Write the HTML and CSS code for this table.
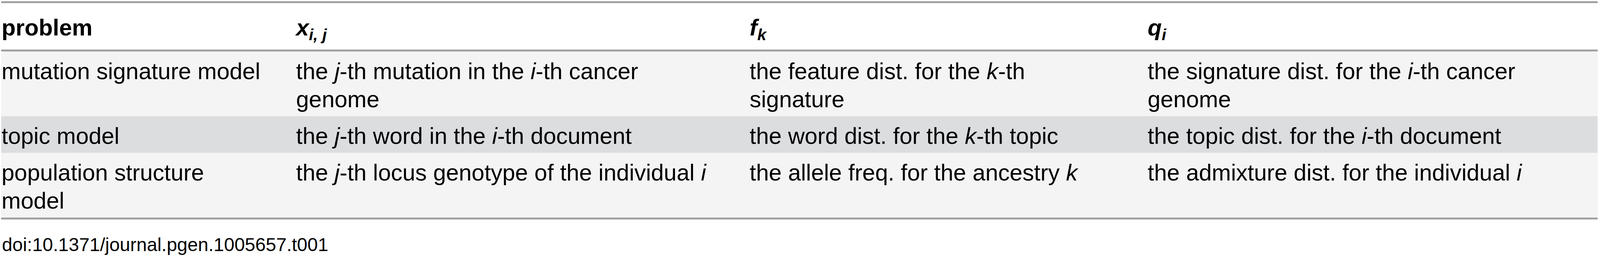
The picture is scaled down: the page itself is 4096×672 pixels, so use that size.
FILE: index.html
```html
<!DOCTYPE html>
<html lang="en">
<head>
<meta charset="utf-8">
<title>Table 1</title>
<link rel="stylesheet" href="styles.css">
</head>
<body>
<div class="wrap">
  <table class="tbl">
    <colgroup>
      <col class="c1"><col class="c2"><col class="c3"><col class="c4">
    </colgroup>
    <thead>
      <tr>
        <th>problem</th>
        <th><span class="sym">x<sub>i, j</sub></span></th>
        <th><span class="sym">f<sub>k</sub></span></th>
        <th><span class="sym">q<sub>i</sub></span></th>
      </tr>
    </thead>
    <tbody>
      <tr class="light">
        <td>mutation signature model</td>
        <td>the <i>j</i>-th mutation in the <i>i</i>-th cancer genome</td>
        <td>the feature dist. for the <i>k</i>-th signature</td>
        <td>the signature dist. for the <i>i</i>-th cancer genome</td>
      </tr>
      <tr class="dark">
        <td>topic model</td>
        <td>the <i>j</i>-th word in the <i>i</i>-th document</td>
        <td>the word dist. for the <i>k</i>-th topic</td>
        <td>the topic dist. for the <i>i</i>-th document</td>
      </tr>
      <tr class="light">
        <td>population structure model</td>
        <td>the <i>j</i>-th locus genotype of the individual <i>i</i></td>
        <td>the allele freq. for the ancestry <i>k</i></td>
        <td>the admixture dist. for the individual <i>i</i></td>
      </tr>
    </tbody>
  </table>
  <p class="doi">doi:10.1371/journal.pgen.1005657.t001</p>
</div>
</body>
</html>
```
FILE: styles.css
```css
html, body {
  margin: 0;
  padding: 0;
  background: #ffffff;
}

body {
  font-family: "Liberation Sans", Arial, Helvetica, sans-serif;
  color: #000000;
}

.wrap {
  padding: 3px 6px 0 3px;
}

.tbl {
  border-collapse: separate;
  border-spacing: 0;
  table-layout: fixed;
  width: 4087px;
  font-size: 59px;
  line-height: 72px;
}

col.c1 { width: 754px; }
col.c2 { width: 1161px; }
col.c3 { width: 1019px; }
col.c4 { width: 1153px; }

.tbl th {
  text-align: left;
  vertical-align: top;
  font-weight: bold;
  line-height: 71px;
  padding: 28px 0 20px 1px;
  border-top: 5px solid #a2a2a2;
  border-bottom: 5px solid #a2a2a2;
  background: #ffffff;
}

.tbl td {
  vertical-align: top;
  padding: 15px 0 7px 1px;
}

.tbl td:nth-child(1) { padding-right: 75px; }
.tbl td:nth-child(2) { padding-right: 80px; }
.tbl td:nth-child(3) { padding-right: 137px; }
.tbl td:nth-child(4) { padding-right: 40px; }

.tbl tbody tr:last-child td {
  border-bottom: 5px solid #a2a2a2;
}

.light { background: #f4f4f4; }
.dark { background: #dcdddf; }

.sym {
  font-style: italic;
}

.sym sub {
  font-size: 0.7em;
  vertical-align: -12px;
  line-height: 0;
}

.doi {
  margin: 37px 0 0 2px;
  font-size: 48px;
  line-height: 55px;
}
```
